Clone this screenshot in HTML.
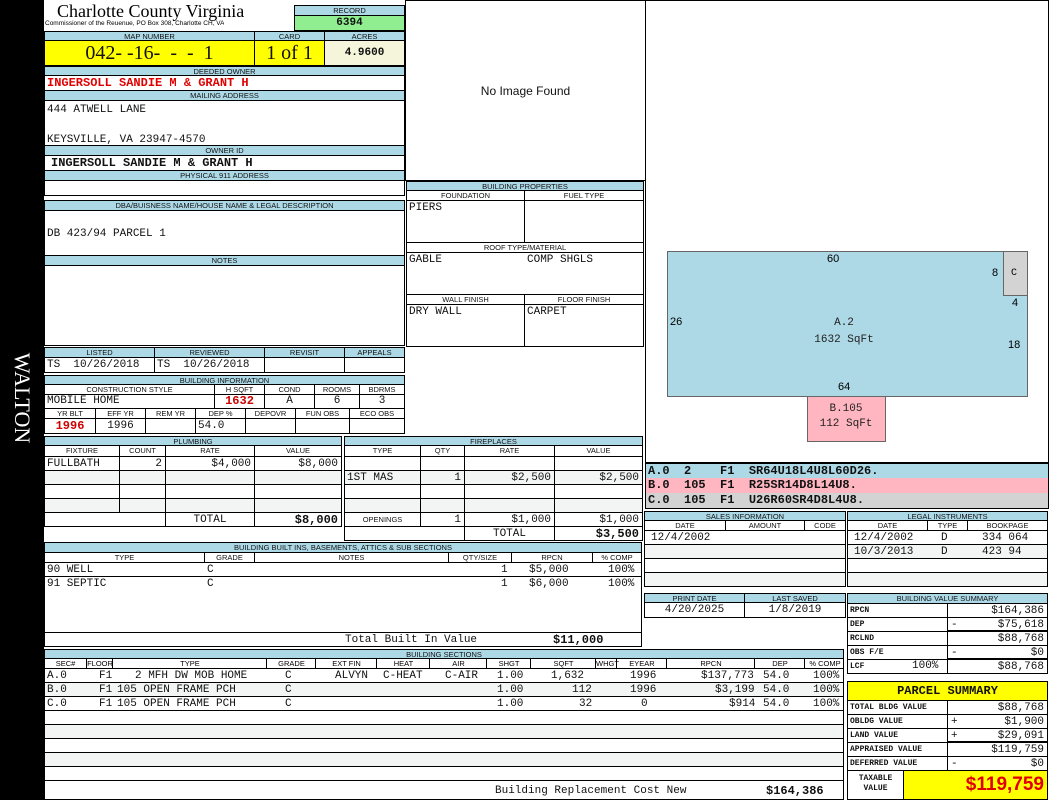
<!DOCTYPE html>
<html><head><meta charset="utf-8">
<style>
*{margin:0;padding:0}
body{width:1050px;height:800px;background:#fff;position:relative;overflow:hidden;font-family:"Liberation Sans",sans-serif}
.a{position:absolute;box-sizing:border-box;white-space:nowrap;overflow:hidden}
.h{position:absolute;box-sizing:border-box;background:#add8e6;border:1px solid #000;font:7.5px/9px "Liberation Sans",sans-serif;text-align:center;white-space:nowrap;overflow:hidden;color:#111}
.v{position:absolute;box-sizing:border-box;background:#fff;border:1px solid #000;font:11px/14px "Liberation Mono",monospace;white-space:nowrap;overflow:hidden;padding-left:2px;color:#111}
.r{text-align:right;padding-right:3px}
.c{text-align:center;padding-left:0}
.g{background:#f3f5f5}
.b{font-weight:bold}
.sm{font:bold 8px "Liberation Mono",monospace}
</style></head><body>
<div class="a" style="left:0;top:0;width:44px;height:800px;background:#000"></div>
<div class="a" style="left:-30px;top:385px;width:104px;height:26px;color:#fff;font:22px/26px 'Liberation Serif',serif;text-align:center;transform:rotate(90deg);overflow:visible">WALTON</div>

<div class="a" style="left:57px;top:1px;font:18px/20px 'Liberation Serif',serif">Charlotte County Virginia</div>
<div class="a" style="left:45px;top:20px;font:6.5px/8px 'Liberation Sans',sans-serif">Commissioner of the Reuenue, PO Box 308, Charlotte CH, VA</div>
<div class="h" style="left:294px;top:5px;width:111px;height:11px">RECORD</div>
<div class="v c b" style="left:294px;top:15px;width:111px;height:16px;background:#90ee90;line-height:14px">6394</div>
<div class="h" style="left:44px;top:31px;width:211px;height:10px">MAP NUMBER</div>
<div class="h" style="left:254px;top:31px;width:71px;height:10px">CARD</div>
<div class="h" style="left:324px;top:31px;width:81px;height:10px">ACRES</div>
<div class="v c" style="left:44px;top:40px;width:211px;height:26px;background:#ff0;font:20px/24px 'Liberation Serif',serif">042- -16- &nbsp;- &nbsp;- &nbsp;1</div>
<div class="v c" style="left:254px;top:40px;width:71px;height:26px;background:#ff0;font:20px/24px 'Liberation Serif',serif">1 of 1</div>
<div class="v c b" style="left:324px;top:40px;width:81px;height:26px;background:#f5f5dc;line-height:24px">4.9600</div>
<div class="h" style="left:44px;top:66px;width:361px;height:10px">DEEDED OWNER</div>
<div class="v b" style="left:44px;top:75px;width:361px;height:16px;color:#e00000;font-size:12px;line-height:15px">INGERSOLL SANDIE M &amp; GRANT H</div>
<div class="h" style="left:44px;top:90px;width:361px;height:11px">MAILING ADDRESS</div>
<div class="v" style="left:44px;top:100px;width:361px;height:46px;line-height:15px;padding-top:2px">444 ATWELL LANE<br><br>KEYSVILLE, VA 23947-4570</div>
<div class="h" style="left:44px;top:145px;width:361px;height:11px">OWNER ID</div>
<div class="v b" style="left:44px;top:155px;width:361px;height:16px;font-size:12px;line-height:15px;padding-left:6px">INGERSOLL SANDIE M &amp; GRANT H</div>
<div class="h" style="left:44px;top:170px;width:361px;height:11px">PHYSICAL 911 ADDRESS</div>
<div class="v" style="left:44px;top:180px;width:361px;height:16px"></div>
<div class="h" style="left:44px;top:200px;width:361px;height:11px">DBA/BUISNESS NAME/HOUSE NAME &amp; LEGAL DESCRIPTION</div>
<div class="v" style="left:44px;top:210px;width:361px;height:46px;line-height:46px">DB 423/94 PARCEL 1</div>
<div class="h" style="left:44px;top:255px;width:361px;height:11px">NOTES</div>
<div class="v" style="left:44px;top:265px;width:361px;height:81px"></div>

<div class="v c" style="left:405px;top:0;width:241px;height:181px;font:12px/180px 'Liberation Sans',sans-serif">No Image Found</div>
<div class="v" style="left:645px;top:0;width:404px;height:463px"></div>
<div class="a" style="left:667px;top:251px;width:361px;height:146px;background:#add8e6;border:1px solid #666"></div>
<div class="a" style="left:1003px;top:251px;width:25px;height:45px;background:#d3d3d3;border:1px solid #666"></div>
<div class="a" style="left:807px;top:396px;width:79px;height:46px;background:#ffb6c1;border:1px solid #666"></div>
<div class="a" style="left:827px;top:253px;font:11px 'Liberation Sans'">60</div>
<div class="a" style="left:992px;top:267px;font:11px 'Liberation Sans'">8</div>
<div class="a" style="left:1011px;top:268px;font:10px 'Liberation Mono'">C</div>
<div class="a" style="left:1012px;top:297px;font:11px 'Liberation Sans'">4</div>
<div class="a" style="left:670px;top:316px;font:11px 'Liberation Sans'">26</div>
<div class="a" style="left:1008px;top:339px;font:11px 'Liberation Sans'">18</div>
<div class="a" style="left:838px;top:381px;font:11px 'Liberation Sans'">64</div>
<div class="a c" style="left:794px;top:315px;width:100px;font:11px/17px 'Liberation Mono';color:#222">A.2<br>1632 SqFt</div>
<div class="a c" style="left:796px;top:402px;width:100px;font:11px/15px 'Liberation Mono';color:#222">B.105<br>112 SqFt</div>
<div class="v b" style="left:645px;top:463px;width:404px;height:16px;background:#add8e6;line-height:14px;font-size:12px">A.0&nbsp; 2 &nbsp;&nbsp;&nbsp;F1 &nbsp;SR64U18L4U8L60D26.</div>
<div class="v b" style="left:645px;top:478px;width:404px;height:16px;background:#ffb6c1;line-height:14px;font-size:12px;border-top:0">B.0&nbsp; 105 &nbsp;F1 &nbsp;R25SR14D8L14U8.</div>
<div class="v b" style="left:645px;top:493px;width:404px;height:16px;background:#d3d3d3;line-height:14px;font-size:12px;border-top:0">C.0&nbsp; 105 &nbsp;F1 &nbsp;U26R60SR4D8L4U8.</div>

<div class="h" style="left:406px;top:181px;width:238px;height:10px">BUILDING PROPERTIES</div>
<div class="h" style="left:406px;top:190px;width:119px;height:11px;background:#fff">FOUNDATION</div>
<div class="h" style="left:524px;top:190px;width:120px;height:11px;background:#fff">FUEL TYPE</div>
<div class="v" style="left:406px;top:200px;width:119px;height:43px">PIERS</div>
<div class="v" style="left:524px;top:200px;width:120px;height:43px"></div>
<div class="h" style="left:406px;top:242px;width:238px;height:11px;background:#fff">ROOF TYPE/MATERIAL</div>
<div class="v" style="left:406px;top:252px;width:238px;height:43px">GABLE<span style="position:absolute;left:120px">COMP SHGLS</span></div>
<div class="h" style="left:406px;top:294px;width:119px;height:11px;background:#fff">WALL FINISH</div>
<div class="h" style="left:524px;top:294px;width:120px;height:11px;background:#fff">FLOOR FINISH</div>
<div class="v" style="left:406px;top:304px;width:119px;height:43px">DRY WALL</div>
<div class="v" style="left:524px;top:304px;width:120px;height:43px">CARPET</div>

<div class="h" style="left:44px;top:347px;width:111px;height:11px">LISTED</div>
<div class="h" style="left:154px;top:347px;width:111px;height:11px">REVIEWED</div>
<div class="h" style="left:264px;top:347px;width:81px;height:11px">REVISIT</div>
<div class="h" style="left:344px;top:347px;width:61px;height:11px">APPEALS</div>
<div class="v" style="left:44px;top:357px;width:111px;height:16px">TS&nbsp; 10/26/2018</div>
<div class="v" style="left:154px;top:357px;width:111px;height:16px">TS&nbsp; 10/26/2018</div>
<div class="v" style="left:264px;top:357px;width:81px;height:16px"></div>
<div class="v" style="left:344px;top:357px;width:61px;height:16px"></div>

<div class="h" style="left:44px;top:375px;width:361px;height:10px">BUILDING INFORMATION</div>
<div class="h" style="left:44px;top:384px;width:171px;height:11px;background:#fff">CONSTRUCTION STYLE</div>
<div class="h" style="left:214px;top:384px;width:51px;height:11px;background:#fff">H SQFT</div>
<div class="h" style="left:264px;top:384px;width:51px;height:11px;background:#fff">COND</div>
<div class="h" style="left:314px;top:384px;width:46px;height:11px;background:#fff">ROOMS</div>
<div class="h" style="left:359px;top:384px;width:46px;height:11px;background:#fff">BDRMS</div>
<div class="v" style="left:44px;top:394px;width:171px;height:15px;line-height:13px">MOBILE HOME</div>
<div class="v c b" style="left:214px;top:394px;width:51px;height:15px;line-height:13px;color:#d00000;font-size:12px">1632</div>
<div class="v c" style="left:264px;top:394px;width:51px;height:15px;line-height:13px">A</div>
<div class="v c" style="left:314px;top:394px;width:46px;height:15px;line-height:13px">6</div>
<div class="v c" style="left:359px;top:394px;width:46px;height:15px;line-height:13px">3</div>
<div class="h" style="left:44px;top:408px;width:52px;height:11px;background:#fff">YR BLT</div>
<div class="h" style="left:95px;top:408px;width:51px;height:11px;background:#fff">EFF YR</div>
<div class="h" style="left:145px;top:408px;width:51px;height:11px;background:#fff">REM YR</div>
<div class="h" style="left:195px;top:408px;width:51px;height:11px;background:#fff">DEP %</div>
<div class="h" style="left:245px;top:408px;width:51px;height:11px;background:#fff">DEPOVR</div>
<div class="h" style="left:295px;top:408px;width:55px;height:11px;background:#fff">FUN OBS</div>
<div class="h" style="left:349px;top:408px;width:56px;height:11px;background:#fff">ECO OBS</div>
<div class="v c b" style="left:44px;top:418px;width:52px;height:16px;color:#d00000;font-size:12px;line-height:14px">1996</div>
<div class="v c" style="left:95px;top:418px;width:51px;height:16px;line-height:14px">1996</div>
<div class="v" style="left:145px;top:418px;width:51px;height:16px"></div>
<div class="v" style="left:195px;top:418px;width:51px;height:16px;line-height:14px">54.0</div>
<div class="v" style="left:245px;top:418px;width:51px;height:16px"></div>
<div class="v" style="left:295px;top:418px;width:55px;height:16px"></div>
<div class="v" style="left:349px;top:418px;width:56px;height:16px"></div>

<!-- plumbing -->
<div class="h" style="left:44px;top:436px;width:298px;height:10px">PLUMBING</div>
<div class="h" style="left:44px;top:445px;width:76px;height:12px;background:#fff">FIXTURE</div>
<div class="h" style="left:119px;top:445px;width:47px;height:12px;background:#fff">COUNT</div>
<div class="h" style="left:165px;top:445px;width:90px;height:12px;background:#fff">RATE</div>
<div class="h" style="left:254px;top:445px;width:88px;height:12px;background:#fff">VALUE</div>
<div class="v" style="left:44px;top:456px;width:76px;height:15px">FULLBATH</div>
<div class="v r" style="left:119px;top:456px;width:47px;height:15px">2</div>
<div class="v r" style="left:165px;top:456px;width:90px;height:15px">$4,000</div>
<div class="v r" style="left:254px;top:456px;width:88px;height:15px">$8,000</div>
<div class="v g" style="left:44px;top:470px;width:76px;height:15px"></div><div class="v g" style="left:119px;top:470px;width:47px;height:15px"></div><div class="v g" style="left:165px;top:470px;width:90px;height:15px"></div><div class="v g" style="left:254px;top:470px;width:88px;height:15px"></div>
<div class="v" style="left:44px;top:484px;width:76px;height:15px"></div><div class="v" style="left:119px;top:484px;width:47px;height:15px"></div><div class="v" style="left:165px;top:484px;width:90px;height:15px"></div><div class="v" style="left:254px;top:484px;width:88px;height:15px"></div>
<div class="v g" style="left:44px;top:498px;width:76px;height:15px"></div><div class="v g" style="left:119px;top:498px;width:47px;height:15px"></div><div class="v g" style="left:165px;top:498px;width:90px;height:15px"></div><div class="v g" style="left:254px;top:498px;width:88px;height:15px"></div>
<div class="v" style="left:44px;top:512px;width:122px;height:15px"></div>
<div class="v c" style="left:165px;top:512px;width:90px;height:15px">TOTAL</div>
<div class="v r b" style="left:254px;top:512px;width:88px;height:15px;font-size:12px">$8,000</div>

<!-- fireplaces -->
<div class="h" style="left:344px;top:436px;width:299px;height:10px">FIREPLACES</div>
<div class="h" style="left:344px;top:445px;width:77px;height:12px;background:#fff">TYPE</div>
<div class="h" style="left:420px;top:445px;width:45px;height:12px;background:#fff">QTY</div>
<div class="h" style="left:464px;top:445px;width:91px;height:12px;background:#fff">RATE</div>
<div class="h" style="left:554px;top:445px;width:89px;height:12px;background:#fff">VALUE</div>
<div class="v" style="left:344px;top:456px;width:77px;height:15px"></div><div class="v" style="left:420px;top:456px;width:45px;height:15px"></div><div class="v" style="left:464px;top:456px;width:91px;height:15px"></div><div class="v" style="left:554px;top:456px;width:89px;height:15px"></div>
<div class="v g" style="left:344px;top:470px;width:77px;height:15px">1ST MAS</div><div class="v r g" style="left:420px;top:470px;width:45px;height:15px">1</div><div class="v r g" style="left:464px;top:470px;width:91px;height:15px">$2,500</div><div class="v r g" style="left:554px;top:470px;width:89px;height:15px">$2,500</div>
<div class="v" style="left:344px;top:484px;width:77px;height:15px"></div><div class="v" style="left:420px;top:484px;width:45px;height:15px"></div><div class="v" style="left:464px;top:484px;width:91px;height:15px"></div><div class="v" style="left:554px;top:484px;width:89px;height:15px"></div>
<div class="v g" style="left:344px;top:498px;width:77px;height:15px"></div><div class="v g" style="left:420px;top:498px;width:45px;height:15px"></div><div class="v g" style="left:464px;top:498px;width:91px;height:15px"></div><div class="v g" style="left:554px;top:498px;width:89px;height:15px"></div>
<div class="v c" style="left:344px;top:512px;width:77px;height:15px;font:7.5px/13px 'Liberation Sans'">OPENINGS</div><div class="v r" style="left:420px;top:512px;width:45px;height:15px">1</div><div class="v r" style="left:464px;top:512px;width:91px;height:15px">$1,000</div><div class="v r" style="left:554px;top:512px;width:89px;height:15px">$1,000</div>
<div class="v" style="left:344px;top:526px;width:121px;height:15px"></div>
<div class="v c" style="left:464px;top:526px;width:91px;height:15px">TOTAL</div>
<div class="v r b" style="left:554px;top:526px;width:89px;height:15px;font-size:12px">$3,500</div>

<!-- built ins -->
<div class="h" style="left:44px;top:542px;width:598px;height:11px">BUILDING BUILT INS, BASEMENTS, ATTICS &amp; SUB SECTIONS</div>
<div class="h" style="left:44px;top:552px;width:161px;height:11px;background:#fff">TYPE</div>
<div class="h" style="left:204px;top:552px;width:51px;height:11px;background:#fff">GRADE</div>
<div class="h" style="left:254px;top:552px;width:195px;height:11px;background:#fff">NOTES</div>
<div class="h" style="left:448px;top:552px;width:64px;height:11px;background:#fff">QTY/SIZE</div>
<div class="h" style="left:511px;top:552px;width:82px;height:11px;background:#fff">RPCN</div>
<div class="h" style="left:592px;top:552px;width:50px;height:11px;background:#fff">% COMP</div>
<div class="v" style="left:44px;top:562px;width:598px;height:15px">90 WELL<span style="position:absolute;left:162px">C</span><span style="position:absolute;left:456px">1</span><span style="position:absolute;left:484px">$5,000</span><span style="position:absolute;left:563px">100%</span></div>
<div class="v" style="left:44px;top:576px;width:598px;height:15px">91 SEPTIC<span style="position:absolute;left:162px">C</span><span style="position:absolute;left:456px">1</span><span style="position:absolute;left:484px">$6,000</span><span style="position:absolute;left:563px">100%</span></div>
<div class="v" style="left:44px;top:590px;width:598px;height:43px;border-top:0"></div>
<div class="v" style="left:44px;top:632px;width:598px;height:15px">
<span style="position:absolute;left:300px">Total Built In Value</span><span class="b" style="position:absolute;left:508px;font-size:12px">$11,000</span></div>

<!-- sales / legal -->
<div class="h" style="left:644px;top:511px;width:202px;height:10px">SALES INFORMATION</div>
<div class="h" style="left:644px;top:520px;width:82px;height:11px;background:#fff">DATE</div>
<div class="h" style="left:725px;top:520px;width:80px;height:11px;background:#fff">AMOUNT</div>
<div class="h" style="left:804px;top:520px;width:42px;height:11px;background:#fff">CODE</div>
<div class="v" style="left:644px;top:530px;width:202px;height:15px;padding-left:6px">12/4/2002</div>
<div class="v g" style="left:644px;top:544px;width:202px;height:15px"></div>
<div class="v" style="left:644px;top:558px;width:202px;height:15px"></div>
<div class="v g" style="left:644px;top:572px;width:202px;height:15px"></div>
<div class="h" style="left:847px;top:511px;width:201px;height:10px">LEGAL INSTRUMENTS</div>
<div class="h" style="left:847px;top:520px;width:81px;height:11px;background:#fff">DATE</div>
<div class="h" style="left:927px;top:520px;width:41px;height:11px;background:#fff">TYPE</div>
<div class="h" style="left:967px;top:520px;width:81px;height:11px;background:#fff">BOOKPAGE</div>
<div class="v" style="left:847px;top:530px;width:201px;height:15px;padding-left:6px">12/4/2002<span style="position:absolute;left:93px">D</span><span style="position:absolute;left:134px">334 064</span></div>
<div class="v g" style="left:847px;top:544px;width:201px;height:15px;padding-left:6px">10/3/2013<span style="position:absolute;left:93px">D</span><span style="position:absolute;left:134px">423 94</span></div>
<div class="v" style="left:847px;top:558px;width:201px;height:15px"></div>
<div class="v g" style="left:847px;top:572px;width:201px;height:15px"></div>

<div class="h" style="left:644px;top:593px;width:101px;height:10px">PRINT DATE</div>
<div class="h" style="left:744px;top:593px;width:102px;height:10px">LAST SAVED</div>
<div class="v c" style="left:644px;top:602px;width:101px;height:16px;line-height:14px">4/20/2025</div>
<div class="v c" style="left:744px;top:602px;width:102px;height:16px;line-height:14px">1/8/2019</div>

<div class="h" style="left:847px;top:593px;width:201px;height:11px">BUILDING VALUE SUMMARY</div>
<div class="v sm" style="left:847px;top:603px;width:101px;height:15px;line-height:13px">RPCN</div><div class="v r" style="left:947px;top:603px;width:101px;height:15px">$164,386</div>
<div class="v sm" style="left:847px;top:617px;width:101px;height:15px;line-height:13px">DEP</div><div class="v r" style="left:947px;top:617px;width:101px;height:15px;border-bottom:2px solid #000"><span style="position:absolute;left:3px">-</span>$75,618</div>
<div class="v sm" style="left:847px;top:631px;width:101px;height:15px;line-height:13px">RCLND</div><div class="v r" style="left:947px;top:631px;width:101px;height:15px">$88,768</div>
<div class="v sm" style="left:847px;top:645px;width:101px;height:15px;line-height:13px">OBS F/E</div><div class="v r" style="left:947px;top:645px;width:101px;height:15px;border-bottom:2px solid #000"><span style="position:absolute;left:3px">-</span>$0</div>
<div class="v sm" style="left:847px;top:659px;width:101px;height:15px;line-height:13px">LCF<span style="position:absolute;left:64px;font:normal 11px 'Liberation Mono'">100%</span></div><div class="v r" style="left:947px;top:659px;width:101px;height:15px">$88,768</div>

<div class="v c b" style="left:847px;top:681px;width:201px;height:20px;background:#ff0;font-size:12px;line-height:18px">PARCEL SUMMARY</div>
<div class="v sm" style="left:847px;top:700px;width:101px;height:15px;line-height:13px">TOTAL BLDG VALUE</div><div class="v r" style="left:947px;top:700px;width:101px;height:15px">$88,768</div>
<div class="v sm" style="left:847px;top:714px;width:101px;height:15px;line-height:13px">OBLDG VALUE</div><div class="v r" style="left:947px;top:714px;width:101px;height:15px"><span style="position:absolute;left:3px">+</span>$1,900</div>
<div class="v sm" style="left:847px;top:728px;width:101px;height:15px;line-height:13px">LAND VALUE</div><div class="v r" style="left:947px;top:728px;width:101px;height:15px;border-bottom:2px solid #000"><span style="position:absolute;left:3px">+</span>$29,091</div>
<div class="v sm" style="left:847px;top:742px;width:101px;height:15px;line-height:13px">APPRAISED VALUE</div><div class="v r" style="left:947px;top:742px;width:101px;height:15px">$119,759</div>
<div class="v sm" style="left:847px;top:756px;width:101px;height:15px;line-height:13px">DEFERRED VALUE</div><div class="v r" style="left:947px;top:756px;width:101px;height:15px"><span style="position:absolute;left:3px">-</span>$0</div>
<div class="v sm c" style="left:847px;top:770px;width:57px;height:30px;line-height:10px;padding-top:3px">TAXABLE<br>VALUE</div>
<div class="v r b" style="left:903px;top:770px;width:145px;height:30px;background:#ff0;color:#e00000;font:bold 19px/28px 'Liberation Sans',sans-serif">$119,759</div>

<!-- building sections -->
<div class="h" style="left:44px;top:649px;width:800px;height:10px">BUILDING SECTIONS</div>
<div class="a" style="left:44px;top:658px;width:800px;height:11px;font:7.5px/9px 'Liberation Sans';border:1px solid #000;background:#fff">
<span style="position:absolute;left:0;width:41px;text-align:center">SEC#</span>
<span style="position:absolute;left:41px;width:26px;text-align:center;border-left:1px solid #000">FLOOR</span>
<span style="position:absolute;left:67px;width:154px;text-align:center;border-left:1px solid #000">TYPE</span>
<span style="position:absolute;left:221px;width:49px;text-align:center;border-left:1px solid #000">GRADE</span>
<span style="position:absolute;left:270px;width:61px;text-align:center;border-left:1px solid #000">EXT FIN</span>
<span style="position:absolute;left:331px;width:53px;text-align:center;border-left:1px solid #000">HEAT</span>
<span style="position:absolute;left:384px;width:57px;text-align:center;border-left:1px solid #000">AIR</span>
<span style="position:absolute;left:441px;width:44px;text-align:center;border-left:1px solid #000">SHGT</span>
<span style="position:absolute;left:485px;width:65px;text-align:center;border-left:1px solid #000">SQFT</span>
<span style="position:absolute;left:550px;width:21px;text-align:center;border-left:1px solid #000">WHGT</span>
<span style="position:absolute;left:571px;width:50px;text-align:center;border-left:1px solid #000">EYEAR</span>
<span style="position:absolute;left:621px;width:88px;text-align:center;border-left:1px solid #000">RPCN</span>
<span style="position:absolute;left:709px;width:50px;text-align:center;border-left:1px solid #000">DEP</span>
<span style="position:absolute;left:759px;width:40px;text-align:center;border-left:1px solid #000">% COMP</span>
</div>
<div class="v" style="left:44px;top:668px;width:800px;height:15px">A.0<span style="position:absolute;left:54px">F1</span><span style="position:absolute;left:90px">2 MFH DW MOB HOME</span><span style="position:absolute;left:240px">C</span><span style="position:absolute;left:290px">ALVYN</span><span style="position:absolute;left:338px">C-HEAT</span><span style="position:absolute;left:400px">C-AIR</span><span style="position:absolute;left:452px">1.00</span><span style="position:absolute;left:506px">1,632</span><span style="position:absolute;left:585px">1996</span><span style="position:absolute;left:656px">$137,773</span><span style="position:absolute;left:718px">54.0</span><span style="position:absolute;left:768px">100%</span></div>
<div class="v g" style="left:44px;top:682px;width:800px;height:15px">B.0<span style="position:absolute;left:54px">F1</span><span style="position:absolute;left:72px">105 OPEN FRAME PCH</span><span style="position:absolute;left:240px">C</span><span style="position:absolute;left:452px">1.00</span><span style="position:absolute;left:527px">112</span><span style="position:absolute;left:585px">1996</span><span style="position:absolute;left:670px">$3,199</span><span style="position:absolute;left:718px">54.0</span><span style="position:absolute;left:768px">100%</span></div>
<div class="v" style="left:44px;top:696px;width:800px;height:15px">C.0<span style="position:absolute;left:54px">F1</span><span style="position:absolute;left:72px">105 OPEN FRAME PCH</span><span style="position:absolute;left:240px">C</span><span style="position:absolute;left:452px">1.00</span><span style="position:absolute;left:534px">32</span><span style="position:absolute;left:596px">0</span><span style="position:absolute;left:684px">$914</span><span style="position:absolute;left:718px">54.0</span><span style="position:absolute;left:768px">100%</span></div>
<div class="v" style="left:44px;top:710px;width:800px;height:15px"></div>
<div class="v g" style="left:44px;top:724px;width:800px;height:15px"></div>
<div class="v" style="left:44px;top:738px;width:800px;height:15px"></div>
<div class="v g" style="left:44px;top:752px;width:800px;height:15px"></div>
<div class="v" style="left:44px;top:766px;width:800px;height:15px"></div>
<div class="v" style="left:44px;top:780px;width:800px;height:20px;line-height:20px"><span style="position:absolute;left:450px">Building Replacement Cost New</span><span class="b" style="position:absolute;left:721px;font-size:12px">$164,386</span></div>
</body></html>
